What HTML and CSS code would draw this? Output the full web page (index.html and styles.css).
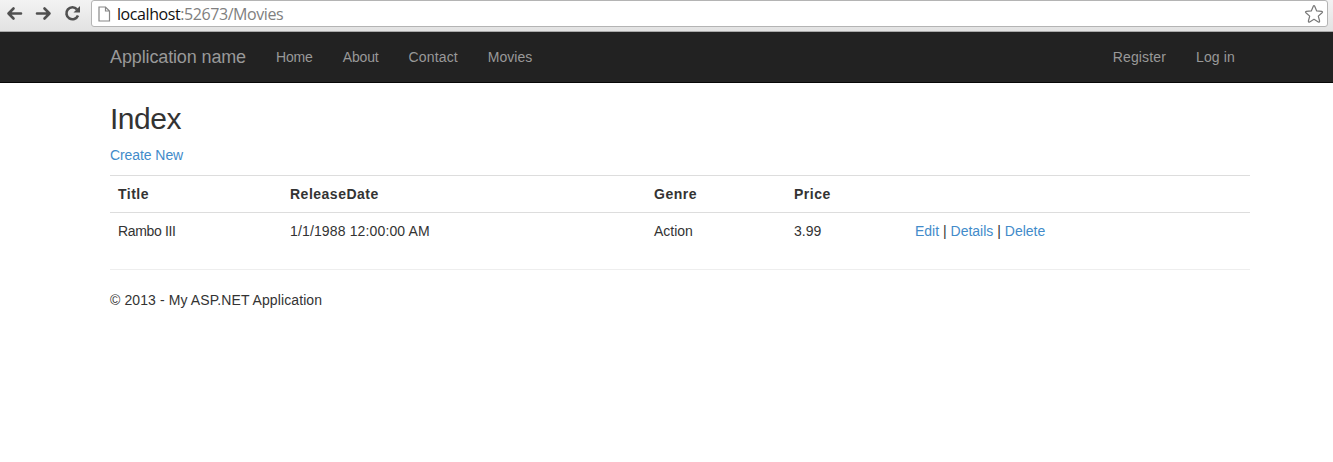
FILE: index.html
```html
<!DOCTYPE html>
<html lang="en">
<head>
<meta charset="utf-8">
<title>Index - My ASP.NET Application</title>
<link rel="stylesheet" href="styles.css">
</head>
<body>
<div class="toolbar">
  <svg class="tools" width="84" height="28" viewBox="0 0 84 28" fill="none" stroke="#505050" stroke-width="2.6" stroke-linecap="round" stroke-linejoin="round">
    <path d="M8.500 13.500H21M13.500 8.500l-5 5 5 5"/>
    <path d="M37 13.500h12.500M44.500 8.500l5 5-5 5"/>
    <path d="M77 9.300A6 6 0 1 0 78 15.500" stroke-linecap="butt"/>
    <path d="M80 6v6.500h-6.500z" fill="#505050" stroke="none"/>
  </svg>
  <div class="address">
    <svg width="13" height="16" viewBox="0 0 13 16" fill="#fff" stroke="#888" stroke-width="1.200"><path d="M1 1h6.500l4 4v10H1zM7.500 1v4h4"/></svg>
    <span class="url"><b>localhost</b>:52673/Movies</span>
    <svg class="star" width="20" height="20" viewBox="0 0 20 20" fill="#fff" stroke="#777" stroke-width="1.200" stroke-linejoin="round"><path d="M9.200 2.400q.8-1.400 1.600 0l1.900 4.500 5 .4q1.400.4.400 1.400l-3.800 3.400 1.300 4.900q.1 1.500-1.300.9L10 15.300l-4.300 2.600q-1.400.6-1.300-.9l1.300-4.900-3.800-3.400q-1-1 .4-1.400l5-.4z"/></svg>
  </div>
</div>
<nav class="navbar">
  <div class="container nav-row">
    <a class="brand">Application name</a>
    <a class="tight">Home</a><a class="tight">About</a><a class="wide">Contact</a><a>Movies</a>
    <a class="push wide">Register</a><a class="wide">Log in</a>
  </div>
</nav>
<main class="container">
  <h2>Index</h2>
  <p><a class="link create">Create New</a></p>
  <table>
    <colgroup><col class="c-title"><col class="c-date"><col class="c-genre"><col class="c-price"><col></colgroup>
    <tr><th>Title</th><th>ReleaseDate</th><th>Genre</th><th>Price</th><th></th></tr>
    <tr><td class="name">Rambo III</td><td class="wide">1/1/1988 12:00:00 AM</td><td>Action</td><td>3.99</td><td><a class="link">Edit</a> | <a class="link">Details</a> | <a class="link">Delete</a></td></tr>
  </table>
  <hr>
  <footer>© 2013 - My ASP.NET Application</footer>
</main>
</body>
</html>
```
FILE: styles.css
```css
* { box-sizing: border-box; }
body { margin: 0; background: #fff; color: #333; font: 14px/20px "Liberation Sans", Arial, sans-serif; overflow: hidden; }
.toolbar { display: flex; height: 32px; padding-right: 5px; background: linear-gradient(#f3f3f3, #e2e2e2); border-bottom: 1px solid #a9a9a9; }
.tools { flex: none; margin-right: 7px; }
.address { display: flex; flex: 1; align-items: center; height: 27px; padding: 0 3px 0 6px; background: #fff; border: 1px solid #b4b4b4; border-radius: 3px; }
.url { margin-left: 6px; color: #808080; font: 16px/18px "Open Sans", sans-serif; letter-spacing: -0.42px; }
.url b { color: #111; font-weight: 400; }
.star { margin-left: auto; }
.navbar { height: 51px; background: #222; border-bottom: 1px solid #080808; }
.container { width: 1140px; margin-left: 110px; }
.nav-row { display: flex; }
.nav-row a { padding: 15px; color: #999; }
.nav-row .brand { padding-left: 0; font-size: 18px; letter-spacing: -0.13px; }
.nav-row .push { margin-left: auto; }
.tight { letter-spacing: -0.15px; }
.wide { letter-spacing: 0.14px; }
h2 { margin: 19px 0 10px; font-size: 30px; font-weight: 400; line-height: 33px; letter-spacing: -0.5px; }
p { margin: 0 0 10px; }
.link { color: #428bca; }
.create { letter-spacing: -0.08px; }
table { width: 100%; table-layout: fixed; border-collapse: separate; border-spacing: 0; }
th, td { padding: 8px; border-top: 1px solid #ddd; text-align: left; }
th { letter-spacing: 0.5px; }
.name { letter-spacing: -0.35px; }
.c-title { width: 172px; }
.c-date { width: 364px; }
.c-genre { width: 140px; }
.c-price { width: 121px; }
hr { height: 1px; margin: 20px 0; border: 0; background: #eee; }
footer { letter-spacing: 0.1px; }
```
